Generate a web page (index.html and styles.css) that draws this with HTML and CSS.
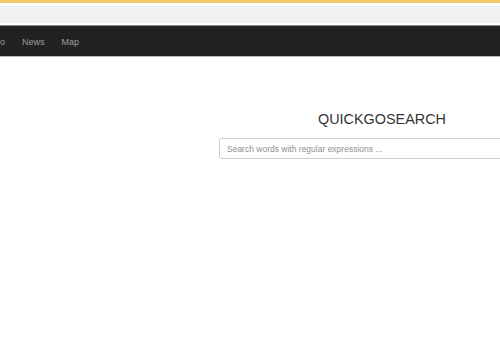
FILE: index.html
```html
<!DOCTYPE html>
<html>
<head>
<meta charset="utf-8">
<link rel="stylesheet" href="styles.css">
</head>
<body>
<div class="topbar"></div>
<div class="subbar"></div>
<nav class="navbar">
  <ul class="nav">
    <li>Info</li>
    <li>News</li>
    <li>Map</li>
  </ul>
</nav>
<main class="main">
  <div class="search">
    <h1 class="title">QUICKGOSEARCH</h1>
    <input class="field" type="text" placeholder="Search words with regular expressions ...">
  </div>
</main>
</body>
</html>
```
FILE: styles.css
```css
html, body {
  margin: 0;
  padding: 0;
  background: #fff;
  overflow: hidden;
  font-family: "Liberation Sans", Arial, sans-serif;
}
.topbar {
  height: 3px;
  background: #f3c86b;
  margin-bottom: 3px;
}
.subbar {
  height: 17px;
  background: #f0f1f3;
  margin-bottom: 2px;
}
.navbar {
  height: 30px;
  background: #222;
  border-top: 1px solid #888;
  border-bottom: 1px solid #bbb;
  display: flex;
  align-items: center;
}
.nav {
  list-style: none;
  margin: 0 0 0 -10px;
  padding: 2px 0 0;
  display: flex;
  gap: 17px;
  color: #9d9d9d;
  font-size: 9px;
}
.main {
  display: flex;
  padding: 54px 0 0 219px;
}
.search {
  width: 326px;
  flex-shrink: 0;
  display: flex;
  flex-direction: column;
  align-items: center;
}
.title {
  margin: 0 0 10px;
  font-size: 14.4px;
  font-weight: normal;
  color: #333;
  line-height: 17px;
}
.field {
  box-sizing: border-box;
  width: 100%;
  height: 21px;
  border: 1px solid #ccc;
  border-radius: 3px;
  padding: 0 7px;
  font-family: "Liberation Sans", Arial, sans-serif;
  font-size: 8.5px;
  color: #555;
  outline: none;
}
.field::placeholder {
  color: #8f8f8f;
}
```
